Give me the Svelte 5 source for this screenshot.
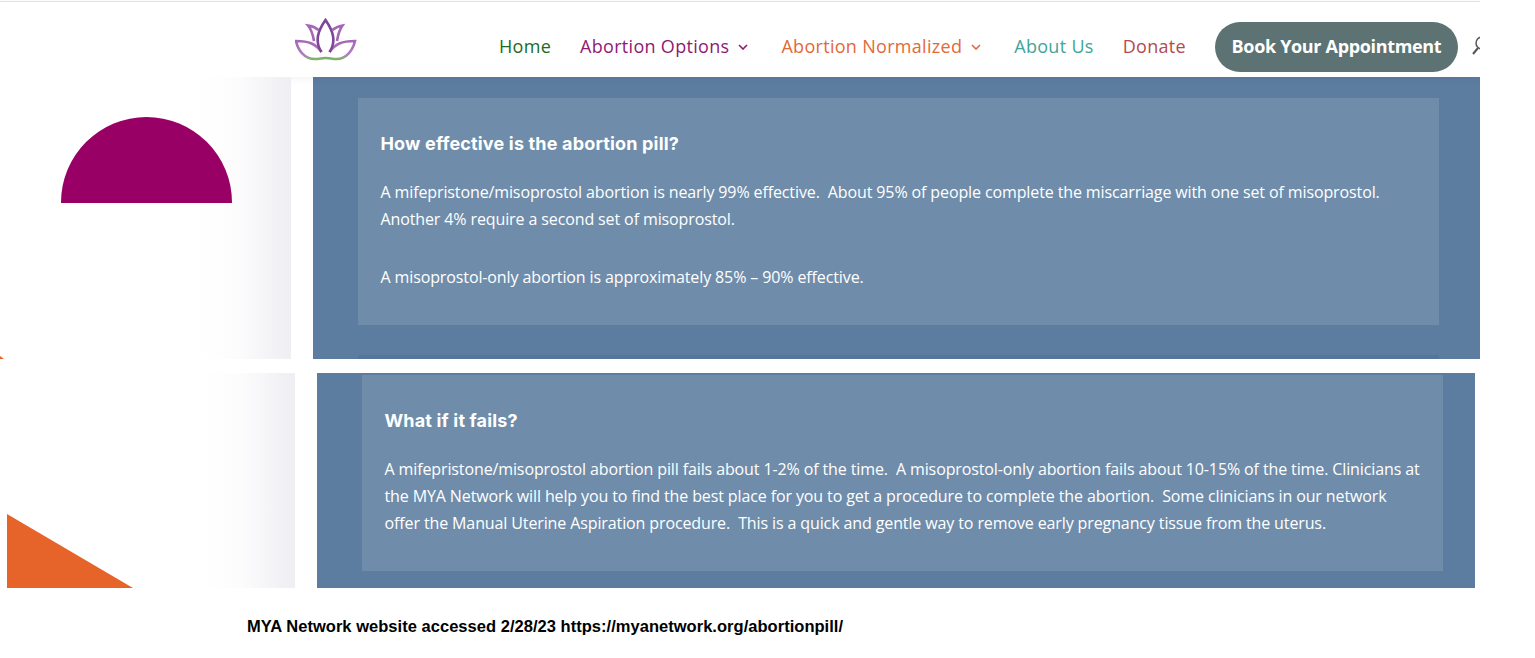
<script>
	const navLinks = [
		{ label: "Home", color: "#1b6b22" },
		{ label: "Abortion Options", color: "#8e1a72", caret: true },
		{ label: "Abortion Normalized", color: "#e2693a", caret: true },
		{ label: "About Us", color: "#43a497" },
		{ label: "Donate", color: "#b24a4e" }
	];
</script>

<div class="page">
	<header class="header">
		<svg class="logo" viewBox="15 18 62 44" width="62" height="44" aria-label="Lotus logo">
			<defs>
				<linearGradient id="petal" x1="0" y1="0" x2="0" y2="1">
					<stop offset="0" stop-color="#a666b8" />
					<stop offset="0.8" stop-color="#b080c0" />
					<stop offset="1" stop-color="#78b860" />
				</linearGradient>
			</defs>
			<path fill="none" stroke="url(#petal)" stroke-width="2.600" d="M41.500 52 C36 44 29 41 16 41 C18 50 24 59 35 59 C39 59 42 58 45.500 58 C49 58 52.500 59 56.500 59 C66.500 59 73 50 75 41 C62 41 55 44 49.500 52" />
			<g fill="none" stroke="#a666b8" stroke-width="2.600">
				<path d="M34 41 C33 35 31 29 28 25.500 C32 26 35 27 38.500 30" />
				<path d="M57 41 C58 35 60 29 62.500 25.500 C59 26 56 27 52.500 30" />
			</g>
			<path d="M41.500 52 C38 47 37 42 38 36 C39 30 42 25 45.500 20 C49 25 52 30 53 36 C54 42 53 47 49.500 52" fill="none" stroke="#7d4698" stroke-width="2.600" />
		</svg>
		<nav class="nav">
			{#each navLinks as link}
				<span class="link" style="color: {link.color}">
					{link.label}
					{#if link.caret}
						<svg class="caret" viewBox="0 0 10 6" width="10" height="6">
							<path d="M1 1 L5 5 L9 1" fill="none" stroke="currentColor" stroke-width="1.600" />
						</svg>
					{/if}
				</span>
			{/each}
		</nav>
		<span class="book">Book Your Appointment</span>
		<svg class="search" viewBox="0 0 18 20" width="18" height="20">
			<circle cx="10" cy="7" r="6" fill="none" stroke="#555" stroke-width="1.500" />
			<path d="M6 12 L1 18" stroke="#555" stroke-width="2" />
		</svg>
	</header>

	<section class="row first">
		<div class="side">
			<div class="half-circle"></div>
			<div class="speck"></div>
		</div>
		<div class="panel">
			<div class="card">
				<h3>How effective is the abortion pill?</h3>
				<p>A mifepristone/misoprostol abortion is nearly 99% effective.&nbsp; About 95% of people complete the miscarriage with one set of misoprostol.&nbsp; Another 4% require a second set of misoprostol.</p>
				<p>A misoprostol-only abortion is approximately 85% – 90% effective.</p>
			</div>
			<div class="next-card"></div>
		</div>
	</section>

	<section class="row second">
		<div class="side">
			<div class="triangle"></div>
		</div>
		<div class="panel">
			<div class="card">
				<h3>What if it fails?</h3>
				<p>A mifepristone/misoprostol abortion pill fails about 1-2% of the time.&nbsp; A misoprostol-only abortion fails about 10-15% of the time. Clinicians at the MYA Network will help you to find the best place for you to get a procedure to complete the abortion.&nbsp; Some clinicians in our network offer the Manual Uterine Aspiration procedure.&nbsp; This is a quick and gentle way to remove early pregnancy tissue from the uterus.</p>
			</div>
		</div>
	</section>

	<p class="caption">MYA Network website accessed 2/28/23 https://myanetwork.org/abortionpill/</p>
</div>

<style>
	:global(body) {
		background: #fff;
		overflow: hidden;
	}
	.page {
		width: 1480px;
		overflow: hidden;
		font-family: "Open Sans", sans-serif;
	}
	.header {
		height: 75px;
		margin-top: 1px;
		border-top: 1px solid #e2e2e2;
		display: flex;
		align-items: flex-start;
		padding-left: 295px;
		box-shadow: 0 2px 8px rgba(0, 0, 0, 0.05);
		position: relative;
	}
	.logo {
		margin-top: 16px;
		flex: none;
	}
	.nav {
		display: flex;
		flex: none;
		gap: 29px;
		margin-left: 142px;
		margin-top: 31px;
		font-size: 18px;
		font-weight: 500;
		line-height: 26px;
		letter-spacing: 0.3px;
	}
	.link {
		display: flex;
		align-items: center;
		white-space: nowrap;
	}
	.caret {
		margin-left: 9px;
		margin-top: 2px;
		margin-right: 4px;
	}
	.book {
		flex: none;
		margin-left: 29px;
		margin-top: 20px;
		width: 243px;
		height: 50px;
		border-radius: 25px;
		background: #5c7273;
		color: #fff;
		font-size: 18px;
		font-weight: 700;
		line-height: 48px;
		text-align: center;
		white-space: nowrap;
		letter-spacing: -0.33px;
	}
	.search {
		margin-left: 14px;
		margin-top: 34px;
		flex: none;
	}
	.row {
		display: flex;
		gap: 22px;
	}
	.first {
		height: 282px;
	}
	.second {
		height: 215px;
		width: 1475px;
		margin-top: 14px;
	}
	.side {
		background: linear-gradient(to right, #fff 68%, #fcfcfd 82%, #eeeef3 100%);
		position: relative;
		overflow: hidden;
	}
	.first .side {
		width: 291px;
		padding: 40px 0 0 60.500px;
		box-sizing: border-box;
	}
	.second .side {
		width: 295px;
		display: flex;
		align-items: flex-end;
		padding-left: 7px;
		box-sizing: border-box;
	}
	.half-circle {
		width: 171px;
		height: 86px;
		background: #990066;
		border-radius: 86px 86px 0 0;
	}
	.speck {
		position: absolute;
		left: 0;
		bottom: 0;
		width: 4px;
		height: 3px;
		background: #e66529;
		clip-path: polygon(0 0, 100% 100%, 0 100%);
	}
	.triangle {
		width: 126px;
		height: 74px;
		background: #e66429;
		clip-path: polygon(0 0, 100% 100%, 0 100%);
	}
	.panel {
		flex: 1;
		background: #5c7ca0;
		padding: 21px 41px 0 45px;
		overflow: hidden;
	}
	.second .panel {
		padding: 2px 32px 0 45px;
	}
	.card {
		background: #6f8dab;
		height: 227px;
		box-sizing: border-box;
		padding: 33px 20px 0 22.500px;
		color: #fff;
	}
	.second .card {
		height: 196px;
	}
	.next-card {
		height: 4px;
		margin-top: 30px;
		background: #56759b;
	}
	h3 {
		margin: 0 0 22px;
		font-family: Inter, sans-serif;
		font-size: 18px;
		font-weight: 700;
		line-height: 26px;
		letter-spacing: 0.17px;
	}
	.card p {
		margin: 0 0 31px;
		font-size: 16px;
		line-height: 27px;
		letter-spacing: -0.115px;
	}
	.caption {
		margin: 27px 0 0 247px;
		font-family: "Liberation Sans", Arial, sans-serif;
		font-size: 16.500px;
		font-weight: 700;
		line-height: 22px;
		letter-spacing: 0.03px;
		color: #000;
	}
</style>
